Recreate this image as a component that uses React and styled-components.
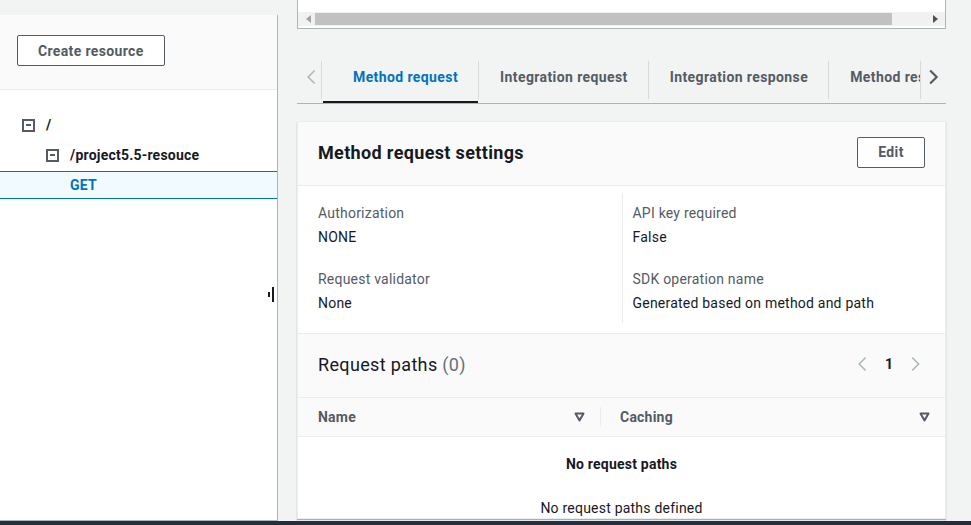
import React from "react";
import styled, { createGlobalStyle } from "styled-components";

const GlobalStyle = createGlobalStyle`
  html, body {
    margin: 0;
    padding: 0;
    background: #f2f3f3;
    font-family: Roboto, "Liberation Sans", Arial, sans-serif;
    font-size: 14px;
    letter-spacing: 0.22px;
    color: #16191f;
  }
  * { box-sizing: border-box; }
`;

const Page = styled.div`
  height: 525px;
  display: flex;
  flex-direction: column;
  overflow: hidden;
`;

const Content = styled.div`
  flex: 1;
  display: flex;
  min-height: 0;
`;

const BottomBar = styled.div`
  height: 4px;
  background: #232f3e;
`;

/* ---------- sidebar ---------- */

const Sidebar = styled.aside`
  position: relative;
  width: 278px;
  margin-top: 15px;
  background: #fff;
  border-right: 1px solid #aab7b8;
  border-bottom: 1px solid #aab7b8;
  display: flex;
  flex-direction: column;
`;

const SidebarTop = styled.div`
  height: 75px;
  padding: 20px 17px 0;
  background: #fafafa;
  border-bottom: 1px solid #eaeded;
`;

const Button = styled.button`
  height: 31px;
  padding: 0 20px;
  background: #fff;
  border: 1px solid #545b64;
  border-radius: 2px;
  color: #545b64;
  font-family: inherit;
  font-size: 14px;
  font-weight: 700;
  letter-spacing: 0.35px;
  cursor: pointer;
`;

const Tree = styled.ul`
  list-style: none;
  margin: 0;
  padding: 20px 0 0;
`;

const TreeRow = styled.li`
  display: flex;
  align-items: center;
  gap: 11px;
  height: ${({ $selected }) => ($selected ? "28px" : "30px")};
  padding-left: ${({ $indent }) => $indent}px;
  font-weight: 700;
  color: ${({ $selected }) => ($selected ? "#0073bb" : "#16191f")};
  background: ${({ $selected }) => ($selected ? "#f1faff" : "transparent")};
  border-top: ${({ $selected }) => ($selected ? "1px solid #0073bb" : "none")};
  border-bottom: ${({ $selected }) => ($selected ? "1px solid #0073bb" : "none")};
  margin-top: ${({ $selected }) => ($selected ? "1px" : "0")};
`;

const Collapse = styled.span`
  width: 13px;
  height: 13px;
  border: 2px solid #545b64;
  display: flex;
  align-items: center;
  justify-content: center;
  &::after {
    content: "";
    width: 5px;
    height: 2px;
    background: #545b64;
  }
`;

const ResizeHandle = styled.div`
  position: absolute;
  right: 2px;
  top: 272px;
  width: 7px;
  height: 16px;
  &::before {
    content: "";
    position: absolute;
    left: 0;
    top: 5px;
    width: 2px;
    height: 5px;
    background: #16191f;
  }
  &::after {
    content: "";
    position: absolute;
    left: 4px;
    top: 0;
    width: 2px;
    height: 15px;
    background: #16191f;
  }
`;

/* ---------- main ---------- */

const Main = styled.main`
  flex: 1;
  min-width: 0;
  padding: 0 25px 0 19px;
  display: flex;
  flex-direction: column;
`;

const TopPanel = styled.div`
  height: 29px;
  background: #fff;
  border: 1px solid #aab7b8;
  border-top: none;
  display: flex;
  flex-direction: column;
  justify-content: flex-end;
  padding: 0 0 2px;
`;

const ScrollBar = styled.div`
  height: 14px;
  background: #f1f1f1;
  display: flex;
  align-items: center;
  padding: 0 4px;
`;

const ScrollArrow = styled.span`
  width: 12px;
  display: flex;
  justify-content: center;
  color: ${({ $on }) => ($on ? "#505050" : "#a3a3a3")};
`;

const ScrollThumb = styled.div`
  height: 12px;
  margin-left: 1px;
  width: 577px;
  background: #c1c1c1;
`;

const ScrollFill = styled.div`
  flex: 1;
`;

const TabStrip = styled.div`
  margin-top: 26px;
  height: 49px;
  display: flex;
  align-items: stretch;
  border-bottom: 1px solid #aab7b8;
`;

const TabArrow = styled.div`
  width: ${({ $w }) => $w}px;
  display: flex;
  align-items: center;
  justify-content: ${({ $side }) => ($side === "left" ? "flex-end" : "flex-start")};
  padding: 0 ${({ $side }) => ($side === "left" ? "5px" : "0")} 5px ${({ $side }) => ($side === "left" ? "0" : "8px")};
  color: ${({ $disabled }) => ($disabled ? "#aab7b8" : "#545b64")};
  position: relative;
  &::after {
    content: "";
    position: absolute;
    top: 6px;
    bottom: 4px;
    ${({ $side }) => ($side === "left" ? "right: 0;" : "left: 0;")}
    width: 1px;
    background: #d5dbdb;
  }
`;

const TabList = styled.div`
  flex: 1;
  min-width: 0;
  display: flex;
  overflow: hidden;
`;

const Tab = styled.div`
  position: relative;
  flex-shrink: 0;
  display: flex;
  align-items: center;
  padding: 0 20px 5px ${({ $first }) => ($first ? "31px" : "22px")};
  font-weight: 700;
  letter-spacing: 0.4px;
  white-space: nowrap;
  color: ${({ $active }) => ($active ? "#0073bb" : "#545b64")};
  ${({ $first }) =>
    !$first &&
    `
    &::before {
      content: "";
      position: absolute;
      left: 0;
      top: 6px;
      bottom: 4px;
      width: 1px;
      background: #d5dbdb;
    }
  `}
  ${({ $active }) =>
    $active &&
    `
    &::after {
      content: "";
      position: absolute;
      left: 1px;
      right: 0;
      bottom: -1px;
      height: 3px;
      background: #16191f;
    }
  `}
`;

const Card = styled.section`
  margin-top: 17px;
  background: #fff;
  border: 1px solid #eaeded;
  box-shadow: 0 1px 1px 0 rgba(0, 28, 36, 0.3);
`;

const CardHeader = styled.div`
  height: 64px;
  padding: 0 20px 3px;
  background: #fafafa;
  border-bottom: 1px solid #eaeded;
  display: flex;
  align-items: center;
  justify-content: space-between;
`;

const CardTitle = styled.h2`
  margin: 0;
  font-size: 18px;
  letter-spacing: 0.35px;
  font-weight: ${({ $light }) => ($light ? 400 : 700)};
  color: #16191f;
`;

const Count = styled.span`
  color: #687078;
`;

const EditButton = styled(Button)`
  width: 68px;
  padding: 0;
`;

const Details = styled.div`
  padding: 7px 20px 10px;
  display: grid;
  grid-template-columns: 1fr 1fr;
  border-bottom: 1px solid #eaeded;
`;

const DetailColumn = styled.div`
  display: flex;
  flex-direction: column;
  gap: 22px;
  padding: 10px ${({ $right }) => ($right ? "10px" : "0")};
  border-left: ${({ $right }) => ($right ? "1px solid #eaeded" : "none")};
`;

const Field = styled.div`
  display: flex;
  flex-direction: column;
  gap: 4px;
  line-height: 20px;
`;

const Label = styled.div`
  color: #545b64;
`;

const Value = styled.div`
  color: #16191f;
`;

const Pager = styled.div`
  display: flex;
  align-items: center;
  gap: 17px;
  font-weight: 700;
  color: #16191f;
  padding-right: 4px;
`;

const PagerArrow = styled.span`
  display: flex;
  color: #aab7b8;
`;

const TableHead = styled.div`
  height: 39px;
  display: grid;
  grid-template-columns: 302px 1fr;
  background: #fafafa;
  border-bottom: 1px solid #eaeded;
`;

const HeadCell = styled.div`
  position: relative;
  display: flex;
  align-items: center;
  justify-content: space-between;
  padding: 0 15px 0 20px;
  font-weight: 700;
  color: #545b64;
  ${({ $divided }) =>
    $divided &&
    `
    &::before {
      content: "";
      position: absolute;
      left: 0;
      top: 9px;
      bottom: 9px;
      width: 1px;
      background: #eaeded;
    }
  `}
`;

const Empty = styled.div`
  display: flex;
  flex-direction: column;
  align-items: center;
  padding-top: 17px;
  gap: 24px;
  line-height: 20px;
`;

const EmptyTitle = styled.div`
  font-weight: 700;
  color: #16191f;
`;

const EmptyText = styled.div`
  color: #16191f;
`;

const Chevron = ({ dir = "right", size = 16, weight = 1.6 }) => (
  <svg width={size * 0.6} height={size} viewBox="0 0 10 16" fill="none">
    <path
      d={dir === "right" ? "M2 2l6 6-6 6" : "M8 2L2 8l6 6"}
      stroke="currentColor"
      strokeWidth={weight}
    />
  </svg>
);

const FilterIcon = () => (
  <svg width="11" height="10" viewBox="0 0 11 10">
    <path d="M1.5 1.5h8L5.5 8.5z" fill="none" stroke="#545b64" strokeWidth="2" strokeLinejoin="round" />
  </svg>
);

const Triangle = ({ dir }) => (
  <svg width="5" height="8" viewBox="0 0 5 8">
    <path d={dir === "left" ? "M5 0v8L0 4z" : "M0 0v8l5-4z"} fill="currentColor" />
  </svg>
);

const fields = {
  left: [
    { label: "Authorization", value: "NONE" },
    { label: "Request validator", value: "None" },
  ],
  right: [
    { label: "API key required", value: "False" },
    { label: "SDK operation name", value: "Generated based on method and path" },
  ],
};

const tabs = ["Method request", "Integration request", "Integration response", "Method response"];

export default function App() {
  return (
    <Page>
      <GlobalStyle />
      <Content>
        <Sidebar>
          <SidebarTop>
            <Button>Create resource</Button>
          </SidebarTop>
          <Tree>
            <TreeRow $indent={22}>
              <Collapse />
              /
            </TreeRow>
            <TreeRow $indent={46}>
              <Collapse />
              /project5.5-resouce
            </TreeRow>
            <TreeRow $indent={70} $selected>
              GET
            </TreeRow>
          </Tree>
          <ResizeHandle />
        </Sidebar>

        <Main>
          <TopPanel>
            <ScrollBar>
              <ScrollArrow>
                <Triangle dir="left" />
              </ScrollArrow>
              <ScrollThumb />
              <ScrollFill />
              <ScrollArrow $on>
                <Triangle dir="right" />
              </ScrollArrow>
            </ScrollBar>
          </TopPanel>

          <TabStrip>
            <TabArrow $w={25} $side="left" $disabled>
              <Chevron dir="left" size={18} weight={1.4} />
            </TabArrow>
            <TabList>
              {tabs.map((t, i) => (
                <Tab key={t} $first={i === 0} $active={i === 0}>
                  {t}
                </Tab>
              ))}
            </TabList>
            <TabArrow $w={26} $side="right">
              <Chevron dir="right" size={18} weight={2} />
            </TabArrow>
          </TabStrip>

          <Card>
            <CardHeader>
              <CardTitle>Method request settings</CardTitle>
              <EditButton>Edit</EditButton>
            </CardHeader>
            <Details>
              <DetailColumn>
                {fields.left.map((f) => (
                  <Field key={f.label}>
                    <Label>{f.label}</Label>
                    <Value>{f.value}</Value>
                  </Field>
                ))}
              </DetailColumn>
              <DetailColumn $right>
                {fields.right.map((f) => (
                  <Field key={f.label}>
                    <Label>{f.label}</Label>
                    <Value>{f.value}</Value>
                  </Field>
                ))}
              </DetailColumn>
            </Details>

            <CardHeader>
              <CardTitle $light>
                Request paths <Count>(0)</Count>
              </CardTitle>
              <Pager>
                <PagerArrow>
                  <Chevron dir="left" size={18} weight={1.4} />
                </PagerArrow>
                1
                <PagerArrow>
                  <Chevron dir="right" size={18} weight={1.4} />
                </PagerArrow>
              </Pager>
            </CardHeader>
            <TableHead>
              <HeadCell>
                Name
                <FilterIcon />
              </HeadCell>
              <HeadCell $divided>
                Caching
                <FilterIcon />
              </HeadCell>
            </TableHead>
            <Empty>
              <EmptyTitle>No request paths</EmptyTitle>
              <EmptyText>No request paths defined</EmptyText>
            </Empty>
          </Card>
        </Main>
      </Content>
      <BottomBar />
    </Page>
  );
}
